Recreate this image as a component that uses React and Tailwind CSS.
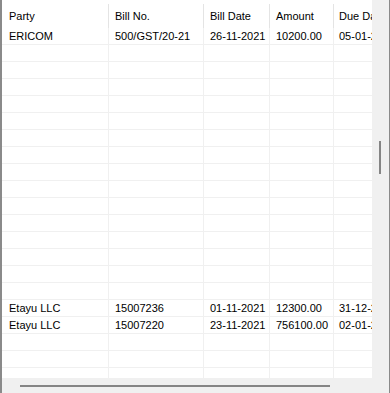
import React from "react";

const columns = [
  { label: "Party", w: "w-[107px]", pad: "pl-[7px]" },
  { label: "Bill No.", w: "w-[95px]", pad: "pl-[6px]" },
  { label: "Bill Date", w: "w-[66px]", pad: "pl-[6px]" },
  { label: "Amount", w: "w-[64px]", pad: "pl-[6px]" },
  { label: "Due Date", w: "w-[60px]", pad: "pl-[5px]" },
];

const empty = ["", "", "", "", ""];

const rows = [
  ["ERICOM", "500/GST/20-21", "26-11-2021", "10200.00", "05-01-2022"],
  ...Array.from({ length: 15 }, () => empty),
  ["Etayu LLC", "15007236", "01-11-2021", "12300.00", "31-12-2021"],
  ["Etayu LLC", "15007220", "23-11-2021", "756100.00", "02-01-2022"],
  empty,
  empty,
  empty,
];

export default function App() {
  return (
    <div
      className="flex w-[390px] h-[393px] overflow-hidden bg-white border-l-2 border-l-[#8a8a8a] border-r border-r-[#8a8a8a] text-[11px] text-black"
      style={{ fontFamily: '"Liberation Sans", Arial, sans-serif' }}
    >
      {/* grid body + horizontal scrollbar */}
      <div className="flex flex-col w-[370px] shrink-0">
        <div className="h-[378px] overflow-hidden bg-white">
          {/* column headers */}
          <div className="flex h-[28px] pt-[4px] whitespace-nowrap">
            {columns.map((c) => (
              <div
                key={c.label}
                className={`${c.w} shrink-0 h-[24px] flex items-center overflow-hidden border-r border-r-[#e4e4e4] ${c.pad} leading-[13px]`}
              >
                <span className="pt-[1px]">{c.label}</span>
              </div>
            ))}
          </div>
          {/* data rows */}
          {rows.map((r, i) => (
            <div
              key={i}
              className="flex h-[17px] border-b border-b-[#f0f0f0] whitespace-nowrap"
            >
              {r.map((v, j) => (
                <div
                  key={j}
                  className={`${columns[j].w} shrink-0 h-full overflow-hidden border-r border-r-[#f0f0f0] ${columns[j].pad} leading-[16px]`}
                >
                  {v}
                </div>
              ))}
            </div>
          ))}
        </div>
        {/* horizontal scrollbar */}
        <div className="flex-1 bg-[#f0f0f0] pt-[7px] pl-[18px]">
          <div className="w-[310px] h-[2px] bg-[#858585]" />
        </div>
      </div>
      {/* vertical scrollbar */}
      <div className="w-[17px] h-full bg-[#f0f0f0] pt-[141px] pl-[7px]">
        <div className="w-[2px] h-[33px] bg-[#858585]" />
      </div>
    </div>
  );
}
